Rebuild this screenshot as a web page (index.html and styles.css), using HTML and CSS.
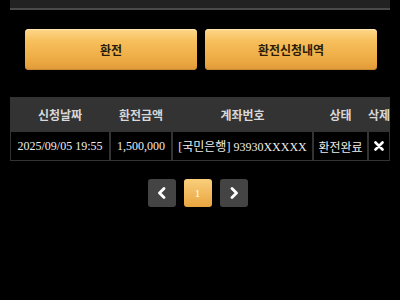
FILE: index.html
```html
<!DOCTYPE html>
<html lang="ko">
<head>
<meta charset="utf-8">
<link rel="stylesheet" href="styles.css">
</head>
<body>
<div class="wrap">
  <div class="topbar"></div>
  <div class="actions">
    <button class="btn">환전</button>
    <button class="btn">환전신청내역</button>
  </div>
  <div class="table-box">
    <table class="list">
      <colgroup>
        <col class="c1"><col class="c2"><col class="c3"><col class="c4"><col class="c5">
      </colgroup>
      <thead>
        <tr>
          <th>신청날짜</th>
          <th>환전금액</th>
          <th>계좌번호</th>
          <th>상태</th>
          <th class="last">삭제</th>
        </tr>
      </thead>
      <tbody>
        <tr>
          <td>2025/09/05 19:55</td>
          <td>1,500,000</td>
          <td>[국민은행] 93930XXXXX</td>
          <td class="ko">환전완료</td>
          <td class="del"><svg width="10" height="10" viewBox="0 0 10 10"><path d="M1.5 1.5 L8.5 8.5 M8.5 1.5 L1.5 8.5" stroke="#fff" stroke-width="2.6" stroke-linecap="round"/></svg></td>
        </tr>
      </tbody>
    </table>
  </div>
  <div class="pager">
    <a class="pg nav"><svg width="10" height="12" viewBox="0 0 10 12"><path d="M7 1.5 L2.5 6 L7 10.5" fill="none" stroke="#fff" stroke-width="2.8" stroke-linecap="round" stroke-linejoin="round"/></svg></a>
    <a class="pg cur">1</a>
    <a class="pg nav"><svg width="10" height="12" viewBox="0 0 10 12"><path d="M3 1.5 L7.5 6 L3 10.5" fill="none" stroke="#fff" stroke-width="2.8" stroke-linecap="round" stroke-linejoin="round"/></svg></a>
  </div>
</div>
</body>
</html>
```

FILE: styles.css
```css
html, body {
  margin: 0;
  padding: 0;
  background: #000;
  font-family: "Noto Sans CJK KR", "Noto Sans", sans-serif;
}
.wrap {
  width: 380px;
  margin-left: 10px;
}
.topbar {
  height: 8px;
  background: #222;
  border-bottom: 2px solid #4a4a4a;
}
.actions {
  display: grid;
  grid-template-columns: 172px 172px;
  column-gap: 8px;
  margin-top: 19px;
  padding-left: 15px;
}
.btn {
  height: 41px;
  border: 0;
  border-radius: 4px;
  background: linear-gradient(#fdd78a 0%, #f7bf5c 30%, #eba841 80%, #e0993a 100%);
  box-shadow: inset 0 1px 0 #ffe7b0, inset 0 -1px 0 #c98a2e;
  color: #2a1c08;
  font-family: "Noto Sans CJK KR", sans-serif;
  font-weight: bold;
  font-size: 12px;
  padding: 0;
}
.table-box {
  margin-top: 27px;
  width: 380px;
  overflow: hidden;
}
.list {
  width: 380px;
  table-layout: fixed;
  border-collapse: separate;
  border-spacing: 0;
}
.c1 { width: 100px; }
.c2 { width: 62px; }
.c3 { width: 141px; }
.c4 { width: 55px; }
.c5 { width: 22px; }
.list th {
  height: 34px;
  padding: 0;
  background: #333;
  color: #d8d8d8;
  font-size: 12px;
  font-weight: bold;
  text-align: center;
  white-space: nowrap;
}
.list th.last {
  text-align: left;
}
.list td {
  height: 28px;
  padding: 0;
  border: 1px solid #333;
  color: #eee;
  font-family: "Liberation Serif", "Noto Sans CJK KR", serif;
  font-size: 12px;
  text-align: center;
  white-space: nowrap;
}
.list td.ko {
  font-family: "Noto Sans CJK KR", sans-serif;
}
.list td.del svg {
  display: block;
  margin: 0 auto;
}
.pager {
  display: flex;
  justify-content: center;
  gap: 8px;
  margin-top: 18px;
  padding-right: 5px;
}
.pg {
  width: 28px;
  height: 28px;
  border-radius: 3px;
  display: flex;
  align-items: center;
  justify-content: center;
}
.pg.nav {
  background: #444;
}
.pg.cur {
  background: linear-gradient(#f9cf7c, #e9a53f);
  color: #fff;
  font-family: "Liberation Serif", serif;
  font-size: 11px;
}
```
